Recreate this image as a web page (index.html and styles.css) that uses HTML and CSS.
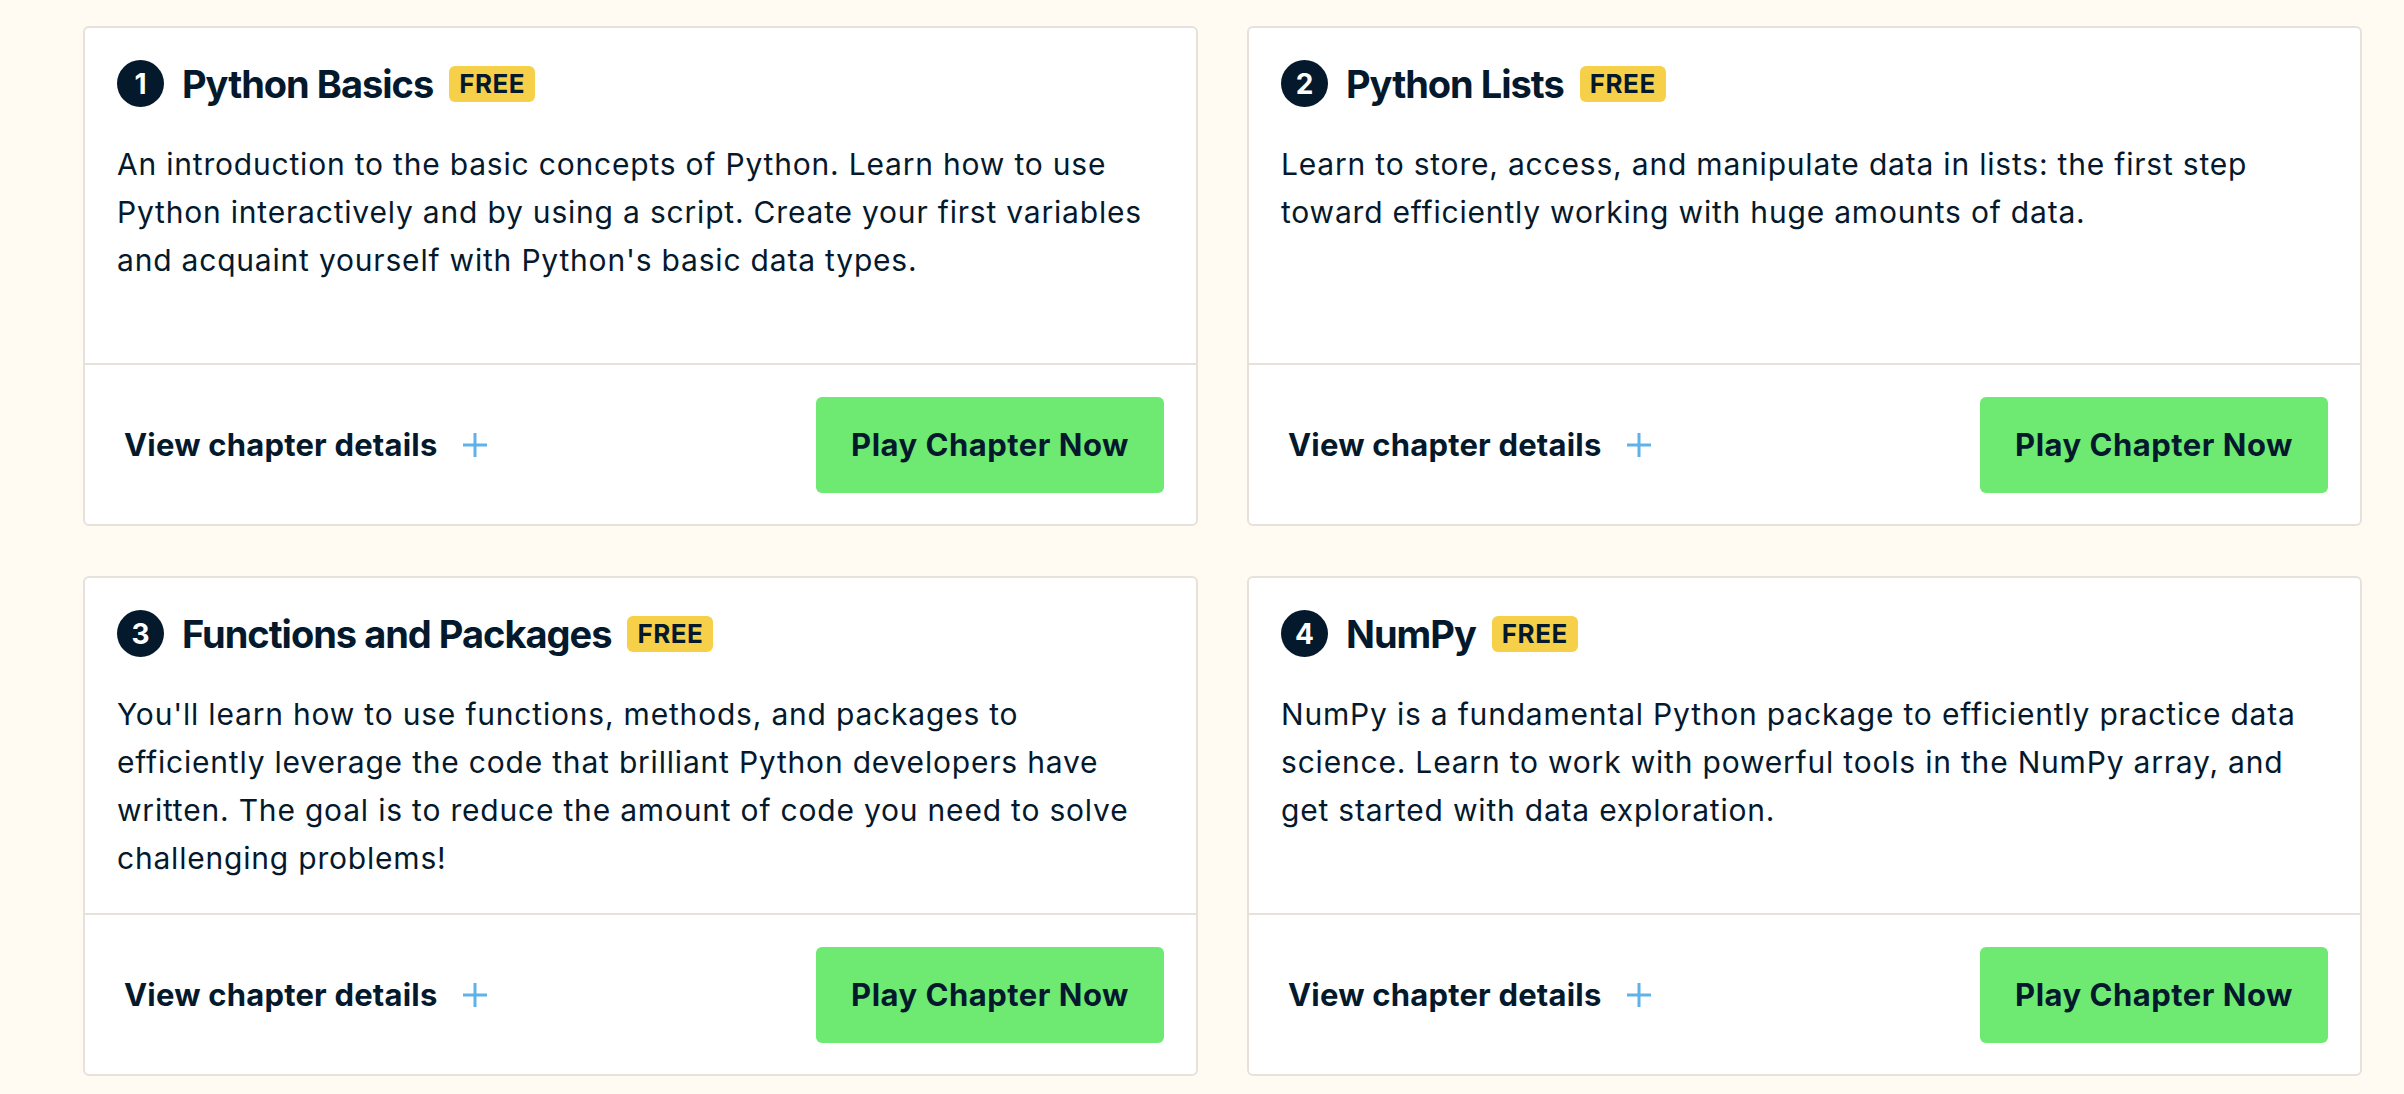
FILE: index.html
```html
<!DOCTYPE html>
<html lang="en">
<head>
<meta charset="utf-8">
<title>Chapters</title>
<link rel="stylesheet" href="styles.css">
</head>
<body>
<main class="chapters">
  <article class="card">
    <div class="card-body">
      <h3 class="card-title"><span class="num">1</span><span class="title-text">Python Basics</span><span class="badge">FREE</span></h3>
      <p class="desc">An introduction to the basic concepts of Python. Learn how to use Python interactively and by using a script. Create your first variables and acquaint yourself with Python's basic data types.</p>
    </div>
    <div class="card-footer">
      <button class="details"><span class="details-text">View chapter details</span><svg class="plus" viewBox="0 0 24 24" width="24" height="24"><path d="M12 0V24M0 12H24"/></svg></button>
      <button class="play">Play Chapter Now</button>
    </div>
  </article>
  <article class="card">
    <div class="card-body">
      <h3 class="card-title"><span class="num">2</span><span class="title-text">Python Lists</span><span class="badge">FREE</span></h3>
      <p class="desc">Learn to store, access, and manipulate data in lists: the first step toward efficiently working with huge amounts of data.</p>
    </div>
    <div class="card-footer">
      <button class="details"><span class="details-text">View chapter details</span><svg class="plus" viewBox="0 0 24 24" width="24" height="24"><path d="M12 0V24M0 12H24"/></svg></button>
      <button class="play">Play Chapter Now</button>
    </div>
  </article>
  <article class="card">
    <div class="card-body">
      <h3 class="card-title"><span class="num">3</span><span class="title-text">Functions and Packages</span><span class="badge">FREE</span></h3>
      <p class="desc">You'll learn how to use functions, methods, and packages to efficiently leverage the code that brilliant Python developers have written. The goal is to reduce the amount of code you need to solve challenging problems!</p>
    </div>
    <div class="card-footer">
      <button class="details"><span class="details-text">View chapter details</span><svg class="plus" viewBox="0 0 24 24" width="24" height="24"><path d="M12 0V24M0 12H24"/></svg></button>
      <button class="play">Play Chapter Now</button>
    </div>
  </article>
  <article class="card">
    <div class="card-body">
      <h3 class="card-title"><span class="num">4</span><span class="title-text">NumPy</span><span class="badge">FREE</span></h3>
      <p class="desc">NumPy is a fundamental Python package to efficiently practice data science. Learn to work with powerful tools in the NumPy array, and get started with data exploration.</p>
    </div>
    <div class="card-footer">
      <button class="details"><span class="details-text">View chapter details</span><svg class="plus" viewBox="0 0 24 24" width="24" height="24"><path d="M12 0V24M0 12H24"/></svg></button>
      <button class="play">Play Chapter Now</button>
    </div>
  </article>
</main>
</body>
</html>
```
FILE: styles.css
```css
html, body {
  margin: 0;
  padding: 0;
}
body {
  background: #fffaf2;
  color: #05192d;
  font-family: Inter, "Noto Sans", "DejaVu Sans", sans-serif;
}
.chapters {
  display: grid;
  grid-template-columns: 1115px 1115px;
  column-gap: 49px;
  row-gap: 50px;
  padding: 26px 0 0 83px;
}
.card {
  box-sizing: border-box;
  height: 500px;
  background: #ffffff;
  border: 2px solid #e6e2db;
  border-radius: 6px;
  display: flex;
  flex-direction: column;
}
.card-body {
  box-sizing: border-box;
  height: 337px;
  padding: 32px 32px 0 32px;
  border-bottom: 2px solid #e6e2db;
}
.card-title {
  margin: 0;
  display: flex;
  align-items: center;
  height: 47px;
  font-size: 38px;
  font-weight: 700;
  letter-spacing: -1px;
}
.num {
  flex: none;
  width: 47px;
  height: 47px;
  border-radius: 50%;
  background: #05192d;
  color: #ffffff;
  font-size: 28px;
  font-weight: 700;
  display: flex;
  align-items: center;
  justify-content: center;
  letter-spacing: 0;
}
.title-text {
  margin-left: 18px;
}
.badge {
  margin-left: 16px;
  height: 36px;
  line-height: 36px;
  padding: 0 10px;
  border-radius: 6px;
  background: #f7d04a;
  font-size: 26px;
  font-weight: 700;
  letter-spacing: 0.5px;
}
.desc {
  margin: 33px 0 0 0;
  max-width: 1040px;
  font-size: 30px;
  line-height: 48px;
  font-weight: 400;
  letter-spacing: 0.8px;
}
.card-footer {
  flex: 1;
  display: flex;
  align-items: center;
  justify-content: space-between;
  padding: 0 32px;
}
.details {
  display: inline-flex;
  align-items: center;
  gap: 25px;
  padding: 0 7px;
  border: none;
  background: none;
  color: #05192d;
  font-family: inherit;
  font-size: 31px;
  font-weight: 700;
  letter-spacing: 0.2px;
  cursor: pointer;
}
.plus {
  display: block;
  fill: none;
  stroke: #5eb2e8;
  stroke-width: 3;
}
.play {
  box-sizing: border-box;
  width: 348px;
  height: 96px;
  border: none;
  border-radius: 6px;
  background: #6eea73;
  color: #05192d;
  font-family: inherit;
  font-size: 31px;
  font-weight: 700;
  letter-spacing: 0.5px;
  cursor: pointer;
}
```
